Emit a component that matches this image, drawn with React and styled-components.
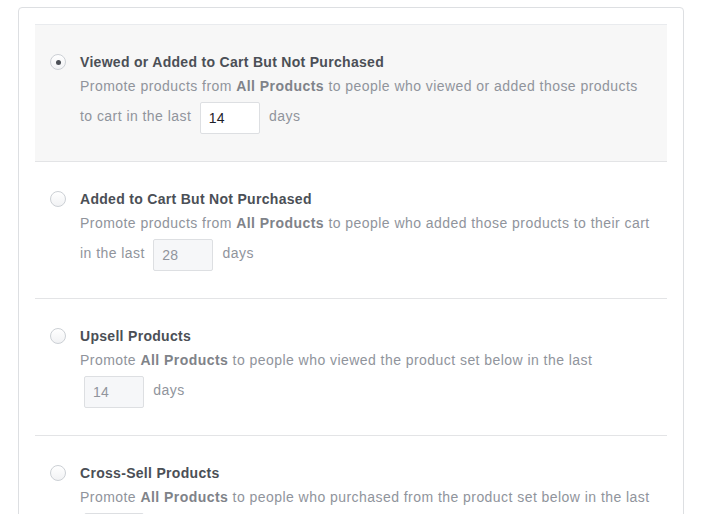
import React, { useState } from "react";
import styled, { createGlobalStyle } from "styled-components";

const GlobalStyle = createGlobalStyle`
  * {
    box-sizing: border-box;
  }
  body {
    margin: 0;
    background: #fff;
    font-family: "Liberation Sans", Arial, Helvetica, sans-serif;
    -webkit-font-smoothing: antialiased;
  }
`;

const Card = styled.div`
  margin: 7px 28px 0 18px;
  padding: 16px 16px 0;
  border: 1px solid #dddfe2;
  border-radius: 4px;
  background: #fff;
  height: 520px;
  overflow: hidden;
`;

const List = styled.div`
  border-top: 1px solid #e9ebee;
`;

const Option = styled.label`
  display: flex;
  align-items: flex-start;
  height: 137px;
  padding: 28px 15px 0 15px;
  border-bottom: 1px solid #e3e4e6;
  background: ${({ $active }) => ($active ? "#f7f7f7" : "#fff")};
  cursor: pointer;
`;

const Radio = styled.span`
  flex: none;
  position: relative;
  width: 16px;
  height: 16px;
  margin-top: 1px;
  margin-right: 14px;
  border: 1px solid #ccd0d5;
  border-radius: 50%;
  background: linear-gradient(#fff, #f1f2f4);

  ${({ $checked }) =>
    $checked &&
    `
    &::after {
      content: '';
      position: absolute;
      top: 4.5px;
      left: 4.5px;
      width: 5px;
      height: 5px;
      border-radius: 50%;
      background: #4b4f56;
    }
  `}
`;

const Body = styled.div`
  flex: 1;
  min-width: 0;
`;

const Title = styled.div`
  font-size: 14px;
  line-height: 18px;
  font-weight: bold;
  letter-spacing: 0.3px;
  color: #4b4f56;
`;

const Description = styled.div`
  margin-top: 3px;
  font-size: 14px;
  line-height: 24px;
  letter-spacing: 0.45px;
  color: #90949c;

  strong {
    color: #7f8389;
    font-weight: bold;
  }
`;

const DaysInput = styled.input`
  display: inline-block;
  vertical-align: middle;
  width: 60px;
  height: 32px;
  margin: 4px 5px 3px 4px;
  padding: 0 8px;
  border: 1px solid #dddfe2;
  border-radius: 2px;
  background: ${({ disabled }) => (disabled ? "#f6f7f9" : "#fff")};
  color: ${({ disabled }) => (disabled ? "#90949c" : "#1d2129")};
  font-family: inherit;
  font-size: 14px;
  letter-spacing: 0.3px;
  outline: none;
`;

const options = [
  {
    id: "viewed",
    title: "Viewed or Added to Cart But Not Purchased",
    before: "Promote products from ",
    after:
      " to people who viewed or added those products to cart in the last",
    days: 14,
  },
  {
    id: "added",
    title: "Added to Cart But Not Purchased",
    before: "Promote products from ",
    after: " to people who added those products to their cart in the last",
    days: 28,
  },
  {
    id: "upsell",
    title: "Upsell Products",
    before: "Promote ",
    after: " to people who viewed the product set below in the last",
    days: 14,
  },
  {
    id: "crosssell",
    title: "Cross-Sell Products",
    before: "Promote ",
    after: " to people who purchased from the product set below in the last",
    days: 14,
  },
];

export default function App() {
  const [selected, setSelected] = useState("viewed");

  return (
    <>
      <GlobalStyle />
      <Card>
        <List>
          {options.map((opt) => {
            const active = opt.id === selected;
            return (
              <Option
                key={opt.id}
                $active={active}
                onClick={() => setSelected(opt.id)}
              >
                <Radio $checked={active} />
                <Body>
                  <Title>{opt.title}</Title>
                  <Description>
                    {opt.before}
                    <strong>All Products</strong>
                    {opt.after}{" "}
                    <DaysInput defaultValue={opt.days} disabled={!active} />{" "}
                    days
                  </Description>
                </Body>
              </Option>
            );
          })}
        </List>
      </Card>
    </>
  );
}
